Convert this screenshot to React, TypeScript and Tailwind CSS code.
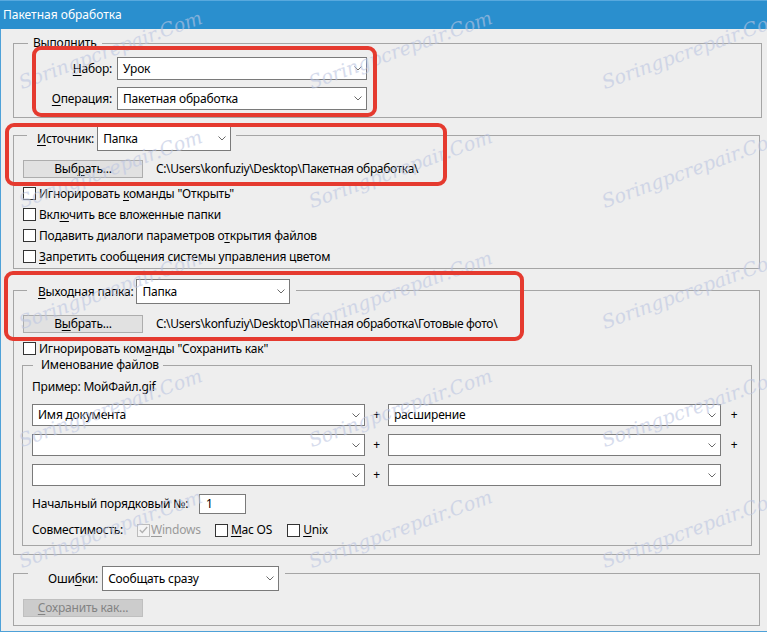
import React from "react";

const U = ({ children }: { children: React.ReactNode }) => (
  <span className="underline decoration-1 underline-offset-[2px]">{children}</span>
);

function Chevron() {
  return (
    <svg width="8" height="5" viewBox="0 0 8 5" className="shrink-0">
      <path d="M0.5 0.5 L4 4 L7.5 0.5" fill="none" stroke="#6a6a6a" strokeWidth="1" />
    </svg>
  );
}

function Select({ value, className }: { value?: string; className: string }) {
  return (
    <div
      className={`flex items-center justify-between bg-white border border-[#7a7a7a] pl-[5px] pr-[4px] shrink-0 ${className}`}
    >
      <span className="text-black whitespace-nowrap">{value}</span>
      <Chevron />
    </div>
  );
}

function Btn({ children, disabled }: { children: React.ReactNode; disabled?: boolean }) {
  return (
    <div
      className={`w-[120px] h-[18px] shrink-0 flex items-center justify-center border ${
        disabled ? "bg-[#cccccc] border-[#bfbfbf] text-[#838383]" : "bg-[#e1e1e1] border-[#adadad] text-black"
      }`}
    >
      {children}
    </div>
  );
}

function Box({ checked, disabled }: { checked?: boolean; disabled?: boolean }) {
  return (
    <span
      className={`w-[13px] h-[13px] shrink-0 border flex items-center justify-center ${
        disabled ? "border-[#bcbcbc] bg-[#f4f4f4]" : "border-[#333333] bg-white"
      }`}
    >
      {checked && (
        <svg width="9" height="8" viewBox="0 0 9 8">
          <path d="M0.8 4 L3.3 6.5 L8.2 1" fill="none" stroke="#b0b0b0" strokeWidth="1.3" />
        </svg>
      )}
    </span>
  );
}

function Check({ children }: { children: React.ReactNode }) {
  return (
    <div className="flex items-center h-[21px] ml-[9px] gap-[3px] whitespace-nowrap">
      <Box />
      <span>{children}</span>
    </div>
  );
}

const marks: { x: number; y: number }[] = [];
[93, 212, 333, 451, 572].forEach((y) => {
  [23, 313, 606].forEach((x) => marks.push({ x, y }));
});

export default function App() {
  return (
    <div className="relative w-[767px] h-[632px] overflow-hidden bg-[#eeeeee] flex flex-col font-['Segoe_UI','Noto_Sans',sans-serif] text-[12px] leading-[16px] tracking-[-0.2px] text-black">
      {/* title bar */}
      <div className="h-[29px] shrink-0 bg-[#2a8fce] border-t border-[#58a9de] flex items-center pl-[3px] text-white text-[12px] tracking-normal">
        Пакетная обработка
      </div>

      <div className="flex-1 border-l border-b border-[#4ea1d8] pl-[12px]">
        {/* Выполнить */}
        <div className="mt-[14px] w-[749px] h-[75px] border border-[#a5a5a5]">
          <div className="-mt-[9px] ml-[14px] h-[16px] flex">
            <span className="bg-[#eeeeee] px-[5px]">Выполнить</span>
          </div>
          <div className="mt-[6px] flex items-center h-[23px]">
            <span className="w-[98px] shrink-0 text-right">
              <U>Н</U>абор:
            </span>
            <Select value="Урок" className="ml-[5px] w-[250px] h-[23px]" />
          </div>
          <div className="mt-[7px] flex items-center h-[23px]">
            <span className="w-[98px] shrink-0 text-right">
              <U>О</U>перация:
            </span>
            <Select value="Пакетная обработка" className="ml-[5px] w-[250px] h-[23px]" />
          </div>
        </div>

        {/* Источник */}
        <div className="mt-[17px] w-[747px] h-[134px] border border-[#a5a5a5]">
          <div className="-mt-[10px] ml-[13px] h-[25px] flex">
            <div className="bg-[#eeeeee] pl-[10px] pr-[5px] flex items-center gap-[3px]">
              <span>
                <U>И</U>сточник:
              </span>
              <Select value="Папка" className="w-[134px] h-[25px]" />
            </div>
          </div>
          <div className="mt-[9px] ml-[9px] flex items-center gap-[13px]">
            <Btn>
              <span>
                Выб<U>р</U>ать...
              </span>
            </Btn>
            <span className="whitespace-nowrap tracking-[-0.35px]">
              {"C:\\Users\\konfuziy\\Desktop\\Пакетная обработка\\"}
            </span>
          </div>
          <div className="mt-[5px]">
            <Check>
              Игнорировать <U>к</U>оманды "Открыть"
            </Check>
            <Check>
              Вкл<U>ю</U>чить все вложенные папки
            </Check>
            <Check>
              Подавить диалоги параметров о<U>т</U>крытия файлов
            </Check>
            <Check>
              <U>З</U>апретить сообщения системы управления цветом
            </Check>
          </div>
        </div>

        {/* Выходная папка */}
        <div className="mt-[21px] w-[747px] h-[265px] border border-[#a5a5a5]">
          <div className="-mt-[12px] ml-[13px] h-[25px] flex">
            <div className="bg-[#eeeeee] pl-[11px] pr-[6px] flex items-center gap-[3px]">
              <span>
                <U>В</U>ыходная папка:
              </span>
              <Select value="Папка" className="w-[154px] h-[25px]" />
            </div>
          </div>
          <div className="mt-[11px] ml-[9px] flex items-center gap-[13px]">
            <Btn>
              <span>
                В<U>ы</U>брать...
              </span>
            </Btn>
            <span className="whitespace-nowrap tracking-[-0.35px]">
              {"C:\\Users\\konfuziy\\Desktop\\Пакетная обработка\\Готовые фото\\"}
            </span>
          </div>
          <div className="mt-[5px]">
            <Check>
              Игнорировать ком<U>а</U>нды "Сохранить как"
            </Check>
          </div>

          {/* Именование файлов */}
          <div className="mt-[6px] ml-[8px] w-[730px] h-[181px] border border-[#a5a5a5]">
            <div className="-mt-[9px] ml-[10px] h-[16px] flex">
              <span className="bg-[#eeeeee] pl-[8px] pr-[4px]">Именование файлов</span>
            </div>
            <div className="pl-[9px]">
              <div className="mt-[6px] h-[16px]">Пример: МойФайл.gif</div>
              <div className="mt-[9px] flex flex-col gap-[8px]">
                {[
                  ["Имя документа", "расширение", true],
                  ["", "", true],
                  ["", "", false],
                ].map(([a, b, plus], i) => (
                  <div key={i} className="flex items-center h-[22px]">
                    <Select value={a as string} className="w-[333px] h-[22px]" />
                    <span className="w-[23px] shrink-0 text-center">+</span>
                    <Select value={b as string} className="w-[333px] h-[22px]" />
                    <span className={`w-[26px] shrink-0 text-center ${plus ? "" : "invisible"}`}>+</span>
                  </div>
                ))}
              </div>
              <div className="mt-[8px] flex items-center h-[20px]">
                <span className="w-[167px] shrink-0 whitespace-nowrap">Начальный порядковый №:</span>
                <div className="w-[47px] h-[20px] bg-white border border-[#7a7a7a] pl-[6px] flex items-center">1</div>
              </div>
              <div className="mt-[8px] flex items-center h-[16px] whitespace-nowrap">
                <span className="w-[105px] shrink-0">Совместимость:</span>
                <Box checked disabled />
                <span className="ml-[1px] text-[#9a9a9a]">
                  <U>W</U>indows
                </span>
                <span className="ml-[14px] flex">
                  <Box />
                </span>
                <span className="ml-[3px]">
                  <U>M</U>ac OS
                </span>
                <span className="ml-[15px] flex">
                  <Box />
                </span>
                <span className="ml-[3px]">
                  <U>U</U>nix
                </span>
              </div>
            </div>
          </div>
        </div>

        {/* Ошибки */}
        <div className="mt-[18px] w-[747px] h-[53px] border border-[#a5a5a5]">
          <div className="-mt-[8px] ml-[14px] h-[25px] flex">
            <div className="bg-[#eeeeee] pl-[20px] pr-[6px] flex items-center gap-[4px]">
              <span>
                Оши<U>б</U>ки:
              </span>
              <Select value="Сообщать сразу" className="w-[177px] h-[25px]" />
            </div>
          </div>
          <div className="mt-[8px] ml-[9px] flex">
            <Btn disabled>
              <span>
                <U>С</U>охранить как...
              </span>
            </Btn>
          </div>
        </div>
      </div>

      {/* watermarks */}
      {marks.map((m, i) => (
        <div
          key={i}
          className="pointer-events-none absolute origin-bottom-left -rotate-[20deg] whitespace-nowrap font-['DejaVu_Serif',serif] italic text-[19px] leading-[22px] tracking-normal text-[#bcc6e2] opacity-60"
          style={{ left: m.x, top: m.y - 22 }}
        >
          Soringpcrepair.Com
        </div>
      ))}

      {/* red annotation boxes */}
      <div className="pointer-events-none absolute left-[32px] top-[46px] w-[345px] h-[71px] border-4 border-[#e53a2f] rounded-[9px]" />
      <div className="pointer-events-none absolute left-[5px] top-[123px] w-[442px] h-[63px] border-4 border-[#e53a2f] rounded-[9px]" />
      <div className="pointer-events-none absolute left-[4px] top-[271px] w-[520px] h-[70px] border-4 border-[#e53a2f] rounded-[9px]" />
    </div>
  );
}
